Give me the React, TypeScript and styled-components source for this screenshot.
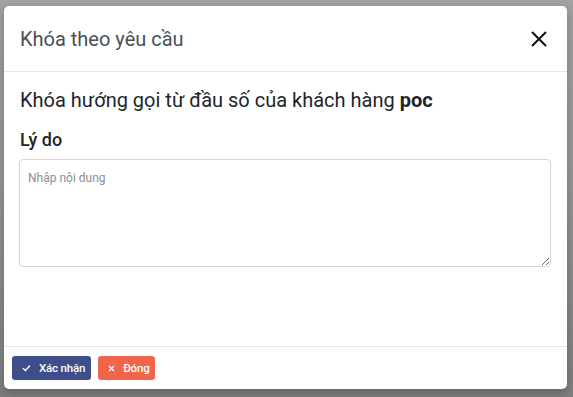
import React from "react";
import styled, { createGlobalStyle } from "styled-components";

const GlobalStyle = createGlobalStyle`
  html, body {
    margin: 0;
    padding: 0;
  }
  body {
    font-family: Roboto, "Liberation Sans", Arial, sans-serif;
    background: #9c9c9c;
  }
`;

const Overlay = styled.div`
  width: 573px;
  height: 397px;
  box-sizing: border-box;
  padding: 6px 6px 0 4px;
  background: linear-gradient(180deg, #a3a3a3 0%, #989898 45%, #7f7f7f 100%);
  overflow: hidden;
`;

const Modal = styled.div`
  width: 563px;
  background: #fff;
  border-radius: 5px;
  box-shadow: 0 4px 12px rgba(0, 0, 0, 0.25);
  display: flex;
  flex-direction: column;
`;

const Header = styled.div`
  height: 65px;
  display: flex;
  align-items: center;
  justify-content: space-between;
  padding: 0 19px 0 16px;
  border-bottom: 1px solid #e6e6e6;
`;

const Title = styled.h5`
  margin: 0;
  font-size: 20px;
  font-weight: 400;
  color: #495057;
`;

const CloseButton = styled.button`
  border: 0;
  background: transparent;
  padding: 0;
  width: 18px;
  height: 18px;
  display: flex;
  align-items: center;
  justify-content: center;
  cursor: pointer;
`;

const Body = styled.div`
  height: 275px;
  box-sizing: border-box;
  padding: 16px 16px 0 15px;
  border-bottom: 1px solid #e6e6e6;
`;

const Message = styled.p`
  margin: 0 0 0 1px;
  font-size: 20px;
  line-height: 24px;
  color: #212529;
  b {
    font-weight: 700;
  }
`;

const Label = styled.div`
  margin: 16px 0 7px 1px;
  font-size: 18px;
  line-height: 24px;
  font-weight: 500;
  color: #212529;
`;

const TextArea = styled.textarea`
  display: block;
  width: 532px;
  height: 108px;
  box-sizing: border-box;
  border: 1px solid #d3d6da;
  border-radius: 4px;
  padding: 11px 8px 10px;
  font-family: Roboto, "Liberation Sans", Arial, sans-serif;
  font-size: 12px;
  color: #495057;
  resize: vertical;
  outline: none;
  &::placeholder {
    color: #8a8f96;
  }
`;

const Footer = styled.div`
  display: flex;
  gap: 7px;
  padding: 9px 8px 9px 8px;
`;

const ActionButton = styled.button<{ $tone: "primary" | "danger" }>`
  height: 24px;
  border: 0;
  border-radius: 3px;
  padding: 0 6px 0 10px;
  display: flex;
  align-items: center;
  gap: 8px;
  color: #fff;
  font-family: Roboto, "Liberation Sans", Arial, sans-serif;
  font-size: 11.5px;
  font-weight: 500;
  letter-spacing: -0.2px;
  background: ${(p) => (p.$tone === "primary" ? "#3e4e8a" : "#f1654a")};
  cursor: pointer;
`;

const App = () => {
  return (
    <>
      <GlobalStyle />
      <Overlay>
        <Modal>
          <Header>
            <Title>Khóa theo yêu cầu</Title>
            <CloseButton aria-label="close">
              <svg width="16" height="16" viewBox="0 0 16 16">
                <path d="M1 1 L15 15 M15 1 L1 15" stroke="#111" strokeWidth="2" />
              </svg>
            </CloseButton>
          </Header>
          <Body>
            <Message>
              Khóa hướng gọi từ đầu số của khách hàng <b>poc</b>
            </Message>
            <Label>Lý do</Label>
            <TextArea placeholder="Nhập nội dung" />
          </Body>
          <Footer>
            <ActionButton $tone="primary">
              <svg width="9" height="8" viewBox="0 0 9 8">
                <path d="M1 4.2 L3.4 6.5 L8 1.5" stroke="#fff" strokeWidth="1.4" fill="none" />
              </svg>
              Xác nhận
            </ActionButton>
            <ActionButton $tone="danger">
              <svg width="7" height="7" viewBox="0 0 7 7">
                <path d="M1 1 L6 6 M6 1 L1 6" stroke="#fff" strokeWidth="1.4" />
              </svg>
              Đóng
            </ActionButton>
          </Footer>
        </Modal>
      </Overlay>
    </>
  );
};

export default App;
